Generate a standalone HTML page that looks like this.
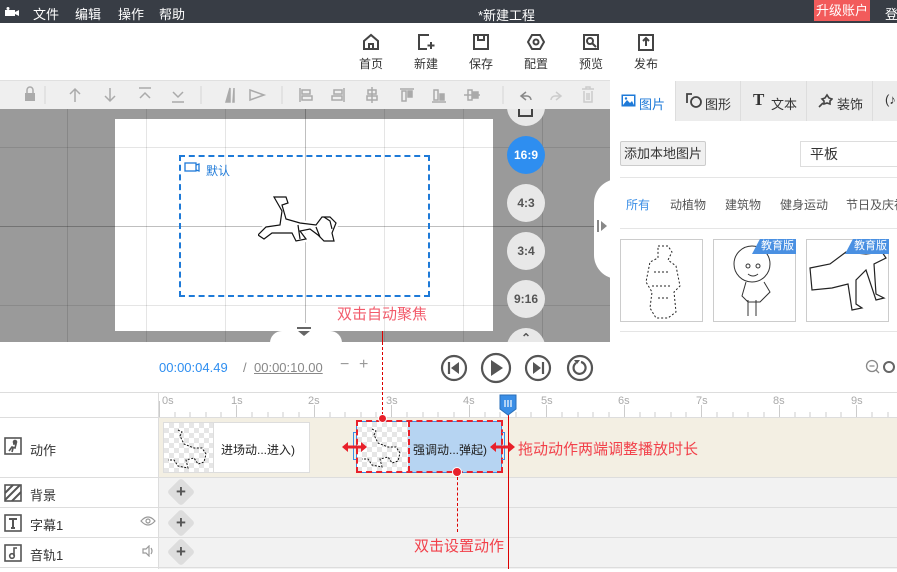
<!DOCTYPE html>
<html><head><meta charset="utf-8"><style>
*{box-sizing:border-box;margin:0;padding:0}
body{width:897px;height:569px;overflow:hidden;position:relative;background:#fff;font-family:"Liberation Sans","Noto Sans CJK SC",sans-serif;font-size:12px;color:#333;white-space:nowrap}
.a{position:absolute}
.top{left:0;top:0;width:897px;height:23px;background:#383d45;color:#fff;font-size:13px}
.tb{text-align:center;width:40px;font-size:12px;color:#333}
.tb svg{display:block;margin:0 auto 4px}
.circ{width:38px;height:38px;border-radius:50%;background:#e8e8e8;color:#555;font-weight:bold;font-size:12px;text-align:center;line-height:38px}
.lbl{font-size:13px;color:#333}
.plus{width:20px;height:20px;transform:rotate(45deg);background:#ddd;border-radius:3px}
.plus span{position:absolute;left:0;top:0;width:20px;height:20px;transform:rotate(-45deg);text-align:center;line-height:20px;font-size:17px;color:#555;font-weight:bold}
.red{color:#f2404a}
.badge{width:44px;height:15px;background:#4a90e2;color:#fff;font-size:11px;line-height:15px;text-align:right;padding-right:2px;clip-path:polygon(18% 0,100% 0,100% 100%,0 100%)}
</style></head><body>
<div class="a top">
 <svg class="a" style="left:5px;top:7px" width="14" height="10"><rect x="0" y="3" width="10" height="6" fill="#fff"/><path d="M10 5l4-2v6l-4-2z" fill="#fff"/><circle cx="3" cy="1.5" r="1.5" fill="#fff"/></svg>
 <span class="a" style="left:33px;top:4px">文件</span>
 <span class="a" style="left:75px;top:4px">编辑</span>
 <span class="a" style="left:118px;top:4px">操作</span>
 <span class="a" style="left:159px;top:4px">帮助</span>
 <span class="a" style="left:478px;top:5px">*新建工程</span>
 <div class="a" style="left:814px;top:0;width:56px;height:21px;background:#f25b5b;text-align:center;line-height:21px">升级账户</div>
 <span class="a" style="left:885px;top:4px">登</span>
</div>
<div class="a tb" style="left:351px;top:33px"><svg width="18" height="18"><path d="M2 8L9 2l7 6v8H2z M7 16v-5h4v5" fill="none" stroke="#444" stroke-width="2"/></svg>首页</div>
<div class="a tb" style="left:406px;top:33px"><svg width="18" height="18"><path d="M12 2H2v14h8" fill="none" stroke="#444" stroke-width="2"/><path d="M14 9v7M10.5 12.5h7" stroke="#444" stroke-width="2"/></svg>新建</div>
<div class="a tb" style="left:461px;top:33px"><svg width="18" height="18"><path d="M2 2h14v14H2z M6 2v5h6V2" fill="none" stroke="#444" stroke-width="2"/></svg>保存</div>
<div class="a tb" style="left:516px;top:33px"><svg width="18" height="18"><path d="M5 2h8l4 7-4 7H5L1 9z" fill="none" stroke="#444" stroke-width="2"/><circle cx="9" cy="9" r="2.5" fill="none" stroke="#444" stroke-width="2"/></svg>配置</div>
<div class="a tb" style="left:571px;top:33px"><svg width="18" height="18"><path d="M2 2h14v14H2z" fill="none" stroke="#444" stroke-width="2"/><circle cx="8" cy="8" r="3" fill="none" stroke="#444" stroke-width="2"/><path d="M10 10l4 4" stroke="#444" stroke-width="2"/></svg>预览</div>
<div class="a tb" style="left:626px;top:33px"><svg width="18" height="18"><path d="M2 2h14v15H2z" fill="none" stroke="#444" stroke-width="2"/><path d="M9 5v8M6 8l3-3 3 3" fill="none" stroke="#444" stroke-width="2"/></svg>发布</div>
<div class="a" style="left:0;top:80px;width:610px;height:29px;background:#efefef;border-top:1px solid #e0e0e0"></div>
<svg class="a" style="left:0;top:80px" width="610" height="29" fill="none" stroke="#aaa" stroke-width="1.5">
 <rect x="25" y="13" width="10" height="8" fill="#aaa" stroke="none"/><path d="M27 13v-3a3 3 0 0 1 6 0v3"/>
 <path d="M45 6v18M201 6v18M282 6v18M503 6v18" stroke="#ddd"/>
 <path d="M75 22V9M70 14l5-5 5 5"/><path d="M110 8v13M105 16l5 5 5-5"/>
 <path d="M139 8h12M140 18l5-5 5 5"/><path d="M172 22h12M173 12l5 5 5-5"/>
 <path d="M230 22V8l-4 14z" fill="#aaa"/><path d="M234 22V8l-1 14z"/><path d="M250 10l14 5-14 5z"/>
 <path d="M300 8v14"/><rect x="302" y="10" width="8" height="4"/><rect x="302" y="16" width="10" height="4"/>
 <path d="M344 8v14"/><rect x="334" y="10" width="8" height="4"/><rect x="332" y="16" width="10" height="4"/>
 <path d="M372 7v16"/><rect x="368" y="10" width="8" height="4"/><rect x="367" y="16" width="10" height="4"/>
 <path d="M400 9h14"/><rect x="402" y="11" width="4" height="10"/><rect x="408" y="11" width="4" height="6" fill="#aaa"/>
 <path d="M432 22h14"/><rect x="434" y="10" width="4" height="10"/><rect x="440" y="14" width="4" height="6" fill="#aaa"/>
 <path d="M464 15h16"/><rect x="468" y="10" width="4" height="10"/><rect x="473" y="12" width="5" height="6" fill="#aaa"/>
 <path d="M526 12l-5 4 5 4M521 16h6a4 4 0 0 1 4 4" stroke="#888"/>
 <path d="M556 12l5 4-5 4M561 16h-6a4 4 0 0 0-4 4" stroke="#ccc"/>
 <path d="M582 9h12M586 9V7h4v2M584 11v11h8V11M587 13v7M589 13v7" stroke="#ccc"/>
</svg>
<div class="a" style="left:0;top:109px;width:610px;height:233px;background:#9a9a9a;overflow:hidden">
 <div class="a" style="left:115px;top:10px;width:378px;height:212px;background:#fff"></div>
 <div class="a" style="left:67px;top:0;width:1px;height:233px;background:rgba(0,0,0,.12)"></div>
 <div class="a" style="left:146px;top:0;width:1px;height:233px;background:rgba(0,0,0,.1)"></div>
 <div class="a" style="left:225px;top:0;width:1px;height:233px;background:rgba(0,0,0,.1)"></div>
 <div class="a" style="left:305px;top:0;width:1px;height:233px;background:rgba(0,0,0,.25)"></div>
 <div class="a" style="left:384px;top:0;width:1px;height:233px;background:rgba(0,0,0,.1)"></div>
 <div class="a" style="left:463px;top:0;width:1px;height:233px;background:rgba(0,0,0,.1)"></div>
 <div class="a" style="left:542px;top:0;width:1px;height:233px;background:rgba(0,0,0,.12)"></div>
 <div class="a" style="left:0;top:38px;width:610px;height:1px;background:rgba(0,0,0,.1)"></div>
 <div class="a" style="left:0;top:117px;width:610px;height:1px;background:rgba(0,0,0,.25)"></div>
 <div class="a" style="left:0;top:196px;width:610px;height:1px;background:rgba(0,0,0,.1)"></div>
 <div class="a" style="left:179px;top:46px;width:251px;height:142px;border:2px dashed #1e7ad8"></div>
 <svg class="a" style="left:184px;top:53px" width="16" height="11"><rect x="1" y="1" width="11" height="8" fill="none" stroke="#1e7ad8" stroke-width="1.3"/><path d="M12 3l3-1v7l-3-1" fill="none" stroke="#1e7ad8" stroke-width="1.3"/></svg>
 <span class="a" style="left:206px;top:53px;color:#1e7ad8;font-size:12px">默认</span>
 <svg class="a" style="left:258px;top:82px" width="96" height="66" fill="none" stroke="#111" stroke-width="1.2"><path d="M18 6l10 0 2 6-6 2 4 14 14 4 16 2 6-8 8 0 6 6-4 10 2 8-10 0-6-6-8-6-10 2 6 8-10 2-4-8-20 0-8 6-6-4 8-8 14-2 2-14-8-14z" fill="#fff" stroke="#fff" stroke-width="6"/><path d="M18 6l10 0 2 6-6 2 4 14 14 4 16 2 6-8 8 0 6 6-4 10 2 8-10 0-6-6-8-6-10 2 6 8-10 2-4-8-20 0-8 6-6-4 8-8 14-2 2-14-8-14z"/><path d="M66 26l6 4 2 8M40 34l2 14M58 36l4 10"/></svg>
 <div class="a" style="left:286px;top:214px;width:40px;height:19px;background:#fff;border-radius:20px 20px 0 0"></div>
 <div class="a" style="left:270px;top:222px;width:72px;height:12px;background:#fff;border-radius:30px 30px 0 0"></div>
 <svg class="a" style="left:297px;top:218px" width="14" height="9"><path d="M0 1h14" stroke="#666" stroke-width="2"/><path d="M1 4h12l-6 5z" fill="#666"/></svg>
 <span class="a red" style="left:337px;top:194px;font-size:15px;color:#f25b6b">双击自动聚焦</span>
 <div class="a" style="left:382px;top:222px;width:1px;height:11px;background:#d00"></div>
 <div class="a circ" style="left:507px;top:-21px"></div>
 <div class="a" style="left:518px;top:0;width:15px;height:8px;border:2px solid #444;border-top:none"></div>
 <div class="a circ" style="left:507px;top:27px;background:#2e8ef0;color:#fff">16:9</div>
 <div class="a circ" style="left:507px;top:75px">4:3</div>
 <div class="a circ" style="left:507px;top:123px">3:4</div>
 <div class="a circ" style="left:507px;top:171px">9:16</div>
 <div class="a circ" style="left:507px;top:219px;line-height:20px">⌃</div>
 <div class="a" style="left:594px;top:70px;width:30px;height:100px;background:#fff;border-radius:24px 0 0 24px"></div>
 <svg class="a" style="left:597px;top:111px" width="10" height="12"><path d="M1 0v12" stroke="#888" stroke-width="2"/><path d="M4 1l6 5-6 5z" fill="#888"/></svg>
</div>
<div class="a" style="left:610px;top:81px;width:287px;height:40px;background:#ececec"></div>
<div class="a" style="left:610px;top:81px;width:65px;height:40px;background:#fff"></div>
<div class="a" style="left:740px;top:81px;width:1px;height:40px;background:#ddd"></div>
<div class="a" style="left:806px;top:81px;width:1px;height:40px;background:#ddd"></div>
<div class="a" style="left:872px;top:81px;width:1px;height:40px;background:#ddd"></div>
<div class="a" style="left:675px;top:81px;width:1px;height:40px;background:#ddd"></div>
<svg class="a" style="left:621px;top:94px" width="15" height="13"><rect x="0.5" y="0.5" width="14" height="12" fill="#1e7ad8"/><rect x="2" y="2" width="11" height="9" fill="#fff"/><path d="M2 11l4-5 3 3 2-2 2 4z" fill="#1e7ad8"/><circle cx="5" cy="4.5" r="1.2" fill="#1e7ad8"/></svg>
<span class="a" style="left:639px;top:94px;color:#1e7ad8;font-size:13px">图片</span>
<svg class="a" style="left:686px;top:93px" width="16" height="15" fill="none" stroke="#444" stroke-width="1.8"><path d="M6 1H1v9"/><circle cx="10" cy="9" r="5"/></svg>
<span class="a" style="left:705px;top:94px;font-size:13px">图形</span>
<span class="a" style="left:753px;top:90px;font-size:17px;font-weight:bold;font-family:'Liberation Serif',serif">T</span>
<span class="a" style="left:771px;top:94px;font-size:13px">文本</span>
<svg class="a" style="left:818px;top:93px" width="15" height="15" fill="none" stroke="#444" stroke-width="1.6"><path d="M9 2l2 3 3 1-2 2 0 3-3-1-3 1 0-3-2-2 3-1zM5 10l-4 4"/></svg>
<span class="a" style="left:837px;top:94px;font-size:13px">装饰</span>
<span class="a" style="left:885px;top:92px;font-size:13px">(♪</span>
<div class="a" style="left:620px;top:141px;width:86px;height:25px;background:#f0f0f0;border:1px solid #ccc;border-radius:2px;text-align:center;line-height:23px;font-size:13px">添加本地图片</div>
<div class="a" style="left:800px;top:141px;width:97px;height:26px;border:1px solid #ddd;border-right:none;padding-left:9px;line-height:24px;font-size:14px">平板</div>
<div class="a" style="left:620px;top:177px;width:277px;height:1px;background:#e5e5e5"></div>
<span class="a" style="left:626px;top:196px;color:#3a8ee6;font-size:12px">所有</span>
<span class="a" style="left:670px;top:196px;color:#555">动植物</span>
<span class="a" style="left:725px;top:196px;color:#555">建筑物</span>
<span class="a" style="left:780px;top:196px;color:#555">健身运动</span>
<span class="a" style="left:846px;top:196px;color:#555">节日及庆祝</span>
<div class="a" style="left:620px;top:228px;width:277px;height:1px;background:#e5e5e5"></div>
<div class="a" style="left:620px;top:239px;width:83px;height:83px;border:1px solid #ccc;background:#fff"></div>
<div class="a" style="left:713px;top:239px;width:83px;height:83px;border:1px solid #ccc;background:#fff"></div>
<div class="a" style="left:806px;top:239px;width:83px;height:83px;border:1px solid #ccc;background:#fff"></div>
<svg class="a" style="left:640px;top:242px" width="45" height="78" fill="none" stroke="#222" stroke-width="1" stroke-dasharray="2 2"><path d="M18 4h10l4 6-4 8 8 6 4 20-6 6 2 20-8 6-12 0-6-10 2-16-6-10 4-20 8-4z"/><path d="M14 30h16M12 44h20M18 56h10"/></svg>
<svg class="a" style="left:726px;top:242px" width="60" height="78" fill="none" stroke="#333" stroke-width="1"><circle cx="26" cy="22" r="18"/><circle cx="22" cy="24" r="2"/><circle cx="32" cy="24" r="2"/><path d="M22 32q5 4 10 0M20 40l-4 14 6 6 12 0 10-10-6-10M22 58v16M30 58v16"/></svg>
<svg class="a" style="left:808px;top:246px" width="80" height="68" fill="none" stroke="#222" stroke-width="1.2"><path d="M2 22l20-4 16-12 20 2 16-2 4 6-12 6 2 30 8 4-8 2-10-30-10 10 0 24 6 4-10 2-4-26-16 4-20 2z"/></svg>
<div class="a badge" style="left:752px;top:239px">教育版</div>
<div class="a badge" style="left:845px;top:239px">教育版</div>
<div class="a" style="left:620px;top:331px;width:277px;height:1px;background:#e5e5e5"></div>
<span class="a" style="left:159px;top:360px;color:#2e8ef0;font-size:13px">00:00:04.49</span>
<span class="a" style="left:243px;top:360px;color:#888;font-size:13px">/</span>
<span class="a" style="left:254px;top:360px;color:#888;font-size:13px;text-decoration:underline">00:00:10.00</span>
<span class="a" style="left:340px;top:356px;color:#999;font-size:16px">−</span>
<span class="a" style="left:359px;top:356px;color:#999;font-size:16px">+</span>
<svg class="a" style="left:440px;top:352px" width="160" height="32" fill="none" stroke="#555" stroke-width="2.2">
 <circle cx="14" cy="16" r="12"/><path d="M9 10v12" /><path d="M19 10l-8 6 8 6z" fill="#555" stroke="none"/>
 <circle cx="56" cy="16" r="14"/><path d="M51 8l12 8-12 8z" fill="#555" stroke="none"/>
 <circle cx="98" cy="16" r="12"/><path d="M103 10v12"/><path d="M93 10l8 6-8 6z" fill="#555" stroke="none"/>
 <circle cx="140" cy="16" r="12"/><path d="M136 11a6 6 0 1 0 5-1" /><path d="M134 8l3 4 3-4" fill="#555" stroke="none"/>
</svg>
<svg class="a" style="left:865px;top:359px" width="32" height="16" fill="none" stroke="#888" stroke-width="1.3"><circle cx="7" cy="7" r="5.5"/><path d="M4.5 7h5M11 11l3 3"/><circle cx="24" cy="8" r="5" stroke="#666" stroke-width="2"/></svg>
<div class="a" style="left:0;top:392px;width:897px;height:1px;background:#ddd"></div>
<div class="a" style="left:158px;top:392px;width:1px;height:177px;background:#ddd"></div>
<div class="a" style="left:159px;top:418px;width:738px;height:60px;background:#f3efe3"></div>
<div class="a" style="left:159px;top:478px;width:738px;height:91px;background:#f2f2f2"></div>
<div class="a" style="left:0;top:417px;width:897px;height:1px;background:#ddd"></div>
<div class="a" style="left:0;top:477px;width:897px;height:1px;background:#ddd"></div>
<div class="a" style="left:0;top:507px;width:897px;height:1px;background:#ddd"></div>
<div class="a" style="left:0;top:537px;width:897px;height:1px;background:#ddd"></div>
<div class="a" style="left:0;top:567px;width:897px;height:1px;background:#ddd"></div>
<div class="a" style="left:159px;top:393px;width:738px;height:24px;color:#aaa;font-size:11px">
<span class="a" style="left:3px;top:2px">0s</span><span class="a" style="left:72px;top:2px">1s</span><span class="a" style="left:149px;top:2px">2s</span><span class="a" style="left:227px;top:2px">3s</span><span class="a" style="left:304px;top:2px">4s</span><span class="a" style="left:382px;top:2px">5s</span><span class="a" style="left:459px;top:2px">6s</span><span class="a" style="left:537px;top:2px">7s</span><span class="a" style="left:614px;top:2px">8s</span><span class="a" style="left:692px;top:2px">9s</span>
<svg class="a" style="left:0;top:0" width="738" height="24">
<path d="M0.5 8V24M77.5 12V24M155.5 12V24M232.5 12V24M310.5 12V24M387.5 12V24M465.5 12V24M542.5 12V24M620.5 12V24M697.5 12V24" stroke="#ccc"/>
<path d="M16 19V24M31 19V24M47 19V24M62 19V24M93 19V24M109 19V24M124 19V24M140 19V24M171 19V24M186 19V24M202 19V24M217 19V24M248 19V24M264 19V24M279 19V24M295 19V24M326 19V24M341 19V24M357 19V24M372 19V24M403 19V24M419 19V24M434 19V24M450 19V24M481 19V24M496 19V24M512 19V24M527 19V24M558 19V24M574 19V24M589 19V24M605 19V24M636 19V24M651 19V24M667 19V24M682 19V24M713 19V24M729 19V24" stroke="#ccc"/></svg>
</div>
<svg class="a" style="left:4px;top:437px" width="18" height="18" fill="none" stroke="#555" stroke-width="1.6"><rect x="1" y="1" width="16" height="16"/><circle cx="11" cy="5" r="1.5" fill="#555"/><path d="M5 14l3-4 3 1 1-4-3 0M9 11l-1 4"/></svg>
<span class="a lbl" style="left:30px;top:440px">动作</span>
<svg class="a" style="left:4px;top:484px" width="18" height="18"><rect x="1" y="1" width="16" height="16" fill="none" stroke="#555" stroke-width="1.6"/><path d="M1 9L9 1M1 16L16 1M8 17L17 8" stroke="#555" stroke-width="2"/></svg>
<span class="a lbl" style="left:30px;top:485px">背景</span>
<svg class="a" style="left:4px;top:514px" width="18" height="18"><rect x="1" y="1" width="16" height="16" fill="none" stroke="#555" stroke-width="1.6"/><path d="M5 5h8M9 5v9M7 14h4" stroke="#555" stroke-width="2"/></svg>
<span class="a lbl" style="left:30px;top:515px">字幕1</span>
<svg class="a" style="left:140px;top:516px" width="16" height="10" fill="none" stroke="#999" stroke-width="1.2"><path d="M1 5q7-8 14 0q-7 8-14 0z"/><circle cx="8" cy="5" r="2"/></svg>
<svg class="a" style="left:4px;top:544px" width="18" height="18"><rect x="1" y="1" width="16" height="16" fill="none" stroke="#555" stroke-width="1.6"/><circle cx="8" cy="12" r="2.3" fill="none" stroke="#555" stroke-width="1.6"/><path d="M10 12V4h3" stroke="#555" stroke-width="1.6" fill="none"/></svg>
<span class="a lbl" style="left:30px;top:545px">音轨1</span>
<svg class="a" style="left:142px;top:545px" width="12" height="12" fill="none" stroke="#999" stroke-width="1.2"><path d="M1 4h3l3-3v10l-3-3H1z"/><path d="M9 3q2 3 0 6"/></svg>
<div class="a plus" style="left:171px;top:482px"><span>+</span></div>
<div class="a plus" style="left:171px;top:513px"><span>+</span></div>
<div class="a plus" style="left:171px;top:542px"><span>+</span></div>
<div class="a" style="left:163px;top:422px;width:147px;height:51px;background:#fff;border:1px solid #ddd"></div>
<div class="a" style="left:164px;top:423px;width:50px;height:49px;background:repeating-conic-gradient(#e6e6e6 0 25%,#fff 0 50%) 0 0/10px 10px;border-right:1px solid #ddd"></div>
<svg class="a" style="left:166px;top:426px" width="46" height="44" fill="none" stroke="#111" stroke-width="1" stroke-dasharray="2 1.5"><path d="M12 4l4 2-2 4 4 8 10 4 8 0 4 6-2 8-6 2-4-6-8 2 2 8-10-2-4-6-6 0"/></svg>
<span class="a" style="left:221px;top:441px;font-size:12px;color:#222">进场动...进入)</span>
<div class="a" style="left:356px;top:421px;width:146px;height:52px;background:#b6d4f2;border:1px solid #3a8ee6"></div>
<div class="a" style="left:357px;top:422px;width:51px;height:50px;background:repeating-conic-gradient(#e6e6e6 0 25%,#fff 0 50%) 0 0/10px 10px"></div>
<svg class="a" style="left:360px;top:425px" width="46" height="44" fill="none" stroke="#111" stroke-width="1" stroke-dasharray="2 1.5"><path d="M12 4l4 2-2 4 4 8 10 4 8 0 4 6-2 8-6 2-4-6-8 2 2 8-10-2-4-6-6 0"/></svg>
<div class="a" style="left:356px;top:420px;width:147px;height:53px;border:2px dashed #e8202a"></div>
<div class="a" style="left:408px;top:421px;width:0;height:51px;border-left:2px dashed #e8202a"></div>
<div class="a" style="left:353px;top:432px;width:3px;height:28px;border:1.5px solid #3a8ee6;border-right:none"></div>
<div class="a" style="left:502px;top:432px;width:3px;height:28px;border:1.5px solid #3a8ee6;border-left:none"></div>
<span class="a" style="left:413px;top:441px;font-size:12px;color:#222">强调动...弹起)</span>
<div class="a" style="left:508px;top:405px;width:1px;height:164px;background:#d00"></div>
<svg class="a" style="left:499px;top:394px" width="18" height="22"><path d="M1 1h16v14l-8 6-8-6z" fill="#3a8ee6" stroke="#2a6fb8"/><path d="M6 6v7M9 6v7M12 6v7" stroke="#fff" stroke-width="1.2"/></svg>
<div class="a" style="left:382px;top:342px;width:0;height:78px;border-left:1px dashed #d00"></div>
<div class="a" style="left:378px;top:414px;width:9px;height:9px;border-radius:50%;background:#e8202a;border:1px solid #fff"></div>
<div class="a" style="left:452px;top:467px;width:10px;height:10px;border-radius:50%;background:#e8202a;border:1px solid #fff"></div>
<div class="a" style="left:457px;top:477px;width:0;height:55px;border-left:1px dashed #d00"></div>
<span class="a" style="left:414px;top:535px;color:#f2404a;font-size:15px">双击设置动作</span>
<svg class="a" style="left:342px;top:440px" width="25" height="14"><path d="M4 7h17" stroke="#e8202a" stroke-width="3"/><path d="M0 7l6-5v10zM25 7l-6-5v10z" fill="#e8202a"/></svg>
<svg class="a" style="left:490px;top:440px" width="25" height="14"><path d="M4 7h17" stroke="#e8202a" stroke-width="3"/><path d="M0 7l6-5v10zM25 7l-6-5v10z" fill="#e8202a"/></svg>
<span class="a" style="left:518px;top:438px;color:#f2404a;font-size:15px">拖动动作两端调整播放时长</span>
</body></html>
